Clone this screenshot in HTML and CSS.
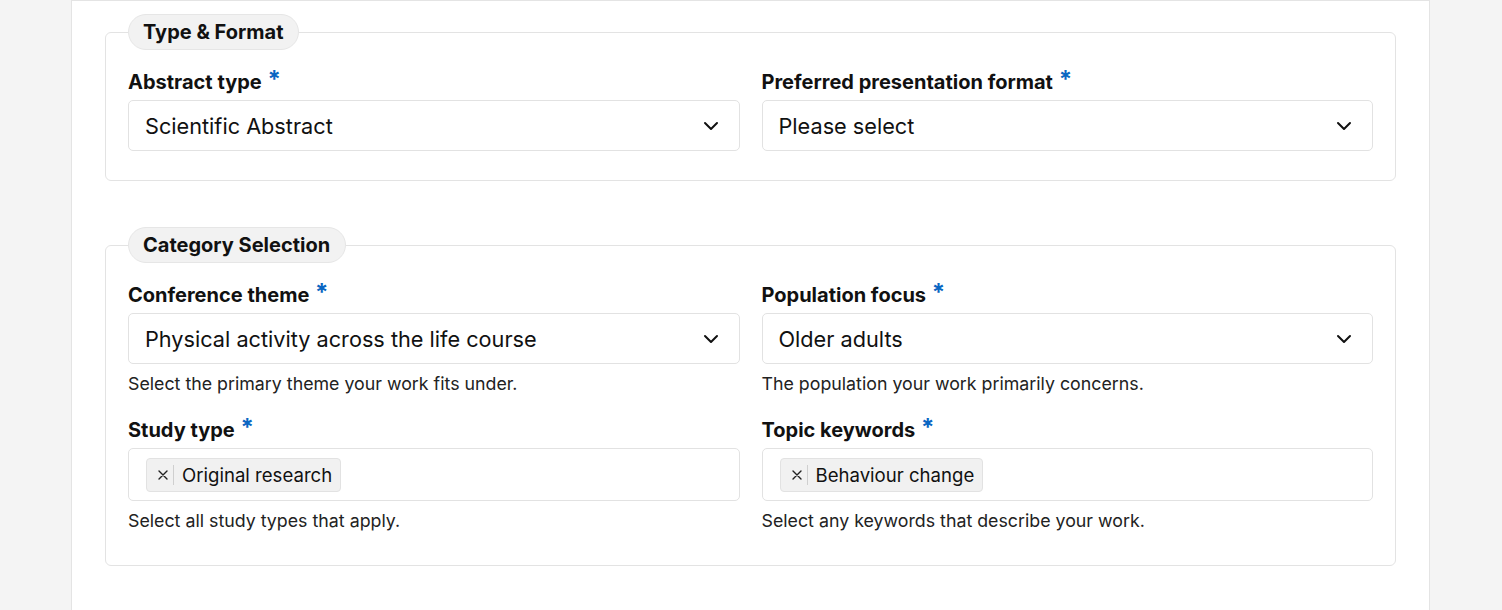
FILE: index.html
```html
<!DOCTYPE html>
<html lang="en">
<head>
<meta charset="utf-8">
<title>Abstract submission</title>
<link rel="stylesheet" href="styles.css">
</head>
<body>
<main class="page">
  <fieldset class="group">
    <legend class="group-title">Type &amp; Format</legend>
    <div class="grid">
      <div class="field">
        <label class="label">Abstract type <span class="req">*</span></label>
        <div class="select"><span>Scientific Abstract</span><svg class="chev" viewBox="0 0 16 10" width="16" height="10"><path d="M2 2l6 6 6-6" fill="none" stroke="#111" stroke-width="2" stroke-linecap="round" stroke-linejoin="round"/></svg></div>
      </div>
      <div class="field">
        <label class="label">Preferred presentation format <span class="req">*</span></label>
        <div class="select"><span>Please select</span><svg class="chev" viewBox="0 0 16 10" width="16" height="10"><path d="M2 2l6 6 6-6" fill="none" stroke="#111" stroke-width="2" stroke-linecap="round" stroke-linejoin="round"/></svg></div>
      </div>
    </div>
  </fieldset>

  <fieldset class="group group-second">
    <legend class="group-title">Category Selection</legend>
    <div class="grid">
      <div class="field">
        <label class="label">Conference theme <span class="req">*</span></label>
        <div class="select"><span>Physical activity across the life course</span><svg class="chev" viewBox="0 0 16 10" width="16" height="10"><path d="M2 2l6 6 6-6" fill="none" stroke="#111" stroke-width="2" stroke-linecap="round" stroke-linejoin="round"/></svg></div>
        <p class="help">Select the primary theme your work fits under.</p>
      </div>
      <div class="field">
        <label class="label">Population focus <span class="req">*</span></label>
        <div class="select"><span>Older adults</span><svg class="chev" viewBox="0 0 16 10" width="16" height="10"><path d="M2 2l6 6 6-6" fill="none" stroke="#111" stroke-width="2" stroke-linecap="round" stroke-linejoin="round"/></svg></div>
        <p class="help">The population your work primarily concerns.</p>
      </div>
      <div class="field">
        <label class="label">Study type <span class="req">*</span></label>
        <div class="multi"><span class="chip"><span class="chip-x"><svg viewBox="0 0 10 10" width="10" height="10"><path d="M1 1l8 8M9 1l-8 8" stroke="#222" stroke-width="1.4" stroke-linecap="round"/></svg></span><span class="chip-text">Original research</span></span></div>
        <p class="help">Select all study types that apply.</p>
      </div>
      <div class="field">
        <label class="label">Topic keywords <span class="req">*</span></label>
        <div class="multi"><span class="chip"><span class="chip-x"><svg viewBox="0 0 10 10" width="10" height="10"><path d="M1 1l8 8M9 1l-8 8" stroke="#222" stroke-width="1.4" stroke-linecap="round"/></svg></span><span class="chip-text">Behaviour change</span></span></div>
        <p class="help">Select any keywords that describe your work.</p>
      </div>
    </div>
  </fieldset>
</main>
</body>
</html>
```

FILE: styles.css
```css
* { box-sizing: border-box; }
html, body { margin: 0; padding: 0; }
body {
  background: #f4f4f4;
  font-family: Inter, "Noto Sans", "Liberation Sans", sans-serif;
  color: #111;
}
.page {
  margin: 0 72px 0 71px;
  min-height: 610px;
  background: #fff;
  border: 1px solid #e4e4e4;
  border-bottom: none;
  padding: 13px 33px 0 33px;
}
.group {
  margin: 0;
  border: 1px solid #e3e3e3;
  border-radius: 6px;
  padding: 20px 22px 29px 22px;
}
.group-second {
  margin-top: 46px;
  padding-bottom: 33px;
}
.group-title {
  padding: 0 15px 0 14px;
  height: 36px;
  line-height: 34px;
  background: #f2f2f2;
  border: 1px solid #e6e6e6;
  border-radius: 18px;
  font-size: 20px;
  font-weight: 700;
  color: #111;
}
.grid {
  display: grid;
  grid-template-columns: 1fr 1fr;
  column-gap: 22px;
  row-gap: 23px;
}
.field { display: flex; flex-direction: column; }
.label {
  font-size: 20px;
  font-weight: 700;
  line-height: 24px;
  margin-bottom: 6px;
}
.req {
  color: #0a66c2;
  font-size: 24px;
  line-height: 0;
  margin-left: 1px;
  vertical-align: 1px;
}
.select {
  height: 51px;
  border: 1px solid #e2e2e2;
  border-radius: 5px;
  display: flex;
  align-items: center;
  justify-content: space-between;
  padding: 0 20px 0 16px;
  font-size: 21.7px;
  color: #111;
}
.chev { display: block; }
.multi {
  height: 53px;
  border: 1px solid #e2e2e2;
  border-radius: 5px;
  display: flex;
  align-items: center;
  padding: 0 17px;
}
.chip {
  display: inline-flex;
  align-items: center;
  height: 34px;
  background: #f1f1f1;
  border: 1px solid #e2e2e2;
  border-radius: 4px;
  font-size: 18.6px;
  color: #111;
}
.chip-x {
  display: flex;
  align-items: center;
  height: 20px;
  padding: 0 5px 0 11px;
  border-right: 1px solid #cfcfcf;
}
.chip-x svg { display: block; }
.chip-text { padding: 0 8px 0 8px; }
.help {
  margin: 9px 0 0 0;
  font-size: 17.8px;
  line-height: 22px;
  color: #222;
}
```
